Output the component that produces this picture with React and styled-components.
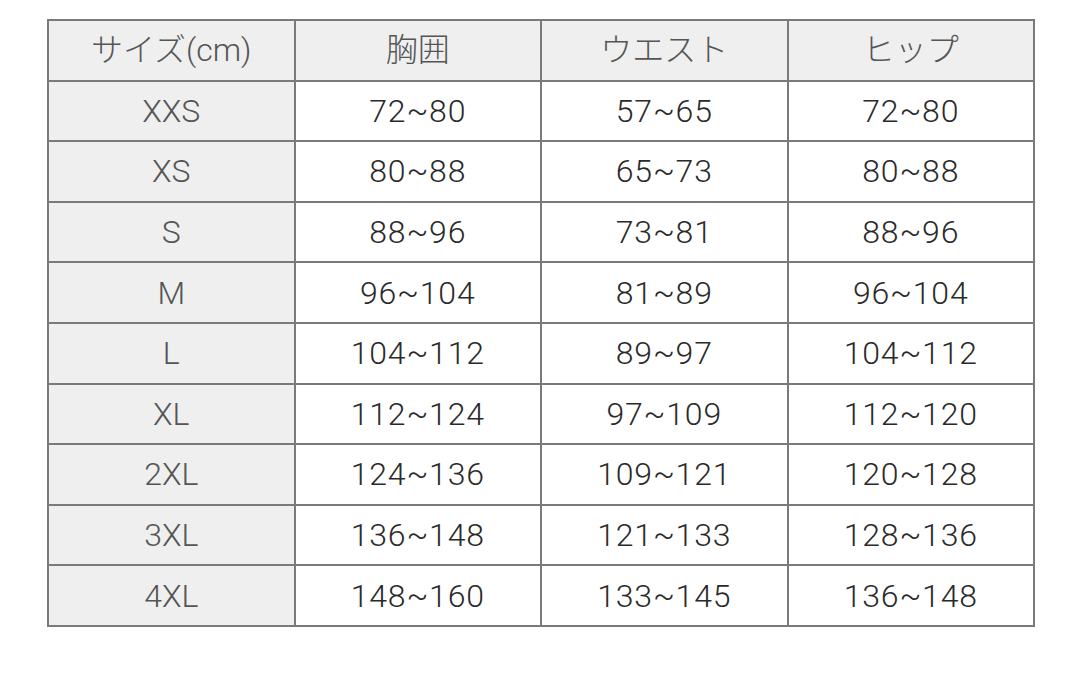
import React from 'react'
import styled, { createGlobalStyle } from 'styled-components'

const GlobalStyle = createGlobalStyle`
  html, body {
    margin: 0;
    padding: 0;
    background: #fff;
  }
  body {
    font-family: Roboto, "Noto Sans CJK JP", sans-serif;
  }
`

const Page = styled.div`
  width: 1080px;
  height: 696px;
  padding: 19px 0 0 47px;
  box-sizing: border-box;
`

const Table = styled.table`
  width: 988px;
  border-collapse: collapse;
  table-layout: fixed;
  border: 2px solid #7a7a7a;
`

const Row = styled.tr`
  height: 60.6px;
`

const Cell = styled.td`
  border: 2px solid #7a7a7a;
  padding: 0;
  text-align: center;
  vertical-align: middle;
  font-size: 32px;
  font-weight: 300;
  line-height: 1;
  letter-spacing: ${p => (p.$head ? '0' : '0.8px')};
  color: ${p => (p.$head ? '#555' : '#2a2a2a')};
  background: ${p => (p.$head ? '#efefef' : '#fff')};
`

const HEADERS = ['サイズ(cm)', '胸囲', 'ウエスト', 'ヒップ']

const ROWS = [
  ['XXS', '72~80', '57~65', '72~80'],
  ['XS', '80~88', '65~73', '80~88'],
  ['S', '88~96', '73~81', '88~96'],
  ['M', '96~104', '81~89', '96~104'],
  ['L', '104~112', '89~97', '104~112'],
  ['XL', '112~124', '97~109', '112~120'],
  ['2XL', '124~136', '109~121', '120~128'],
  ['3XL', '136~148', '121~133', '128~136'],
  ['4XL', '148~160', '133~145', '136~148'],
]

export default function App() {
  return (
    <Page>
      <GlobalStyle />
      <Table>
        <tbody>
          <Row>
            {HEADERS.map(h => (
              <Cell key={h} $head>{h}</Cell>
            ))}
          </Row>
          {ROWS.map(r => (
            <Row key={r[0]}>
              {r.map((v, i) => (
                <Cell key={i} $head={i === 0}>{v}</Cell>
              ))}
            </Row>
          ))}
        </tbody>
      </Table>
    </Page>
  )
}
